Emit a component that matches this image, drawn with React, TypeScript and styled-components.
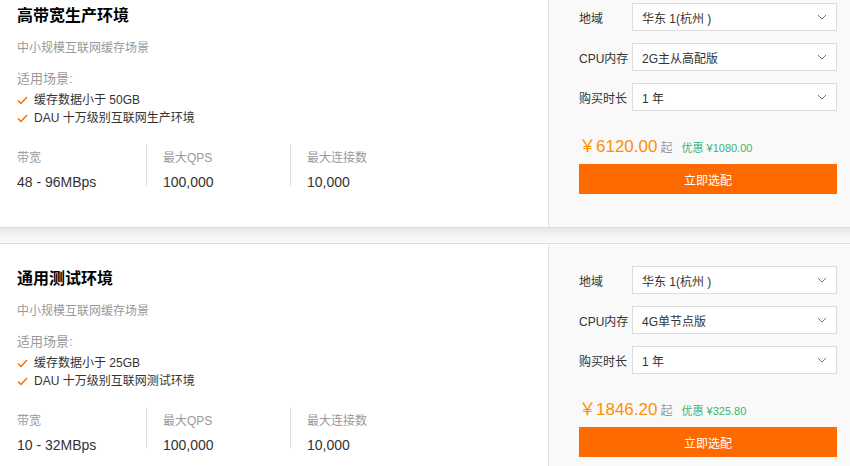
import React from 'react';
import styled, {createGlobalStyle} from "styled-components";

const GlobalStyle = createGlobalStyle`
    body {
        margin: 0;
        background: #fff;
        font-family: "Liberation Sans", "Noto Sans CJK SC", sans-serif;
        overflow: hidden;
    }
`

type Plan = {
    title: string
    scenes: string[]
    stats: { label: string, value: string }[]
    memory: string
    price: string
    discount: string
}

const plans: Plan[] = [
    {
        title: '高带宽生产环境',
        scenes: ['缓存数据小于 50GB', 'DAU 十万级别互联网生产环境'],
        stats: [
            {label: '带宽', value: '48 - 96MBps'},
            {label: '最大QPS', value: '100,000'},
            {label: '最大连接数', value: '10,000'},
        ],
        memory: '2G主从高配版',
        price: '6120.00',
        discount: '¥1080.00',
    },
    {
        title: '通用测试环境',
        scenes: ['缓存数据小于 25GB', 'DAU 十万级别互联网测试环境'],
        stats: [
            {label: '带宽', value: '10 - 32MBps'},
            {label: '最大QPS', value: '100,000'},
            {label: '最大连接数', value: '10,000'},
        ],
        memory: '4G单节点版',
        price: '1846.20',
        discount: '¥325.80',
    },
]

const Check = () => (
    <svg width="11" height="9" viewBox="0 0 11 9">
        <path d="M1 4.5 L4 7.5 L10 1" fill="none" stroke="#ff6a00" strokeWidth="1.5"/>
    </svg>
)

const Chevron = () => (
    <svg width="10" height="6" viewBox="0 0 10 6">
        <path d="M1 1 L5 5 L9 1" fill="none" stroke="#777" strokeWidth="1"/>
    </svg>
)

const Field = ({label, value}: { label: string, value: string }) => (
    <StyledField>
        <StyledFieldLabel>{label}</StyledFieldLabel>
        <StyledSelect>
            <span>{value}</span>
            <Chevron/>
        </StyledSelect>
    </StyledField>
)

const PlanCard = ({plan}: { plan: Plan }) => (
    <StyledCard>
        <StyledInfo>
            <StyledTitle>{plan.title}</StyledTitle>
            <StyledSubtitle>中小规模互联网缓存场景</StyledSubtitle>
            <StyledSceneTitle>适用场景:</StyledSceneTitle>
            <StyledSceneList>
                {plan.scenes.map(s => (
                    <StyledSceneItem key={s}>
                        <Check/>
                        <span>{s}</span>
                    </StyledSceneItem>
                ))}
            </StyledSceneList>
            <StyledStats>
                {plan.stats.map((st, i) => (
                    <StyledStat key={st.label} first={i === 0}>
                        <StyledStatLabel>{st.label}</StyledStatLabel>
                        <StyledStatValue>{st.value}</StyledStatValue>
                    </StyledStat>
                ))}
            </StyledStats>
        </StyledInfo>
        <StyledPanel>
            <Field label="地域" value="华东 1(杭州 )"/>
            <Field label="CPU内存" value={plan.memory}/>
            <Field label="购买时长" value="1 年"/>
            <StyledPriceRow>
                <StyledPrice>￥{plan.price}</StyledPrice>
                <StyledFrom>起</StyledFrom>
                <StyledDiscount>优惠 {plan.discount}</StyledDiscount>
            </StyledPriceRow>
            <StyledButton>立即选配</StyledButton>
        </StyledPanel>
    </StyledCard>
)

export default function App() {
    return (
        <>
            <GlobalStyle/>
            <StyledList>
                {plans.map((p, i) => (
                    <React.Fragment key={p.title}>
                        {i > 0 && <StyledGap/>}
                        <PlanCard plan={p}/>
                    </React.Fragment>
                ))}
            </StyledList>
        </>
    )
}

const StyledList = styled.div`
    margin-top: -20px;
    display: flex;
    flex-direction: column;
`
const StyledGap = styled.div`
    height: 15px;
    background: linear-gradient(to bottom, #e6e6e6, #f4f4f4 50%, #f9f9f9);
`
const StyledCard = styled.section`
    display: flex;
    height: 248px;
    background: #fff;
    border-top: 1px solid #ddd;
    border-bottom: 1px solid #ddd;
    box-sizing: border-box;
`
const StyledInfo = styled.div`
    width: 548px;
    box-sizing: border-box;
    padding: 24px 0 0 17px;
    display: flex;
    flex-direction: column;
`
const StyledTitle = styled.h3`
    margin: 0;
    font-size: 16px;
    line-height: 22px;
    font-weight: bold;
    color: #000;
`
const StyledSubtitle = styled.p`
    margin: 12px 0 0;
    font-size: 12px;
    line-height: 18px;
    color: #999;
`
const StyledSceneTitle = styled.p`
    margin: 13px 0 0;
    font-size: 13px;
    line-height: 18px;
    color: #999;
`
const StyledSceneList = styled.ul`
    list-style: none;
    margin: 3px 0 0;
    padding: 0;
`
const StyledSceneItem = styled.li`
    display: flex;
    align-items: center;
    gap: 6px;
    font-size: 12px;
    line-height: 18px;
    color: #333;
`
const StyledStats = styled.div`
    display: flex;
    margin-top: 17px;
`
const StyledStat = styled.div<{ first?: boolean }>`
    width: ${p => p.first ? '129px' : '144px'};
    box-sizing: border-box;
    padding-left: ${p => p.first ? '0' : '16px'};
    border-left: ${p => p.first ? 'none' : '1px solid #ddd'};
    height: 42px;
`
const StyledStatLabel = styled.div`
    font-size: 12px;
    line-height: 16px;
    color: #999;
    margin-top: 6px;
`
const StyledStatValue = styled.div`
    font-size: 14px;
    line-height: 18px;
    color: #333;
    margin-top: 7px;
`
const StyledPanel = styled.div`
    flex: 1;
    background: #f9f9f9;
    border-left: 1px solid #e3e3e3;
    padding: 22px 13px 0 30px;
    display: flex;
    flex-direction: column;
    gap: 12px;
`
const StyledField = styled.div`
    display: flex;
    align-items: center;
`
const StyledFieldLabel = styled.span`
    width: 53px;
    font-size: 12px;
    color: #333;
`
const StyledSelect = styled.div`
    flex: 1;
    height: 28px;
    box-sizing: border-box;
    background: #fff;
    border: 1px solid #ddd;
    display: flex;
    align-items: center;
    justify-content: space-between;
    padding: 0 9px 0 9px;
    font-size: 12px;
    color: #333;
`
const StyledPriceRow = styled.div`
    display: flex;
    align-items: baseline;
    margin-top: 9px;
    height: 22px;
`
const StyledPrice = styled.span`
    font-size: 17px;
    color: #ff9000;
`
const StyledFrom = styled.span`
    font-size: 12px;
    color: #999;
    margin-left: 3px;
`
const StyledDiscount = styled.span`
    font-size: 11px;
    color: #3cb371;
    margin-left: 9px;
`
const StyledButton = styled.button`
    height: 30px;
    margin-top: -2px;
    background: #ff6a00;
    border: none;
    color: #fff;
    font-family: inherit;
    font-size: 12px;
    cursor: pointer;
`
